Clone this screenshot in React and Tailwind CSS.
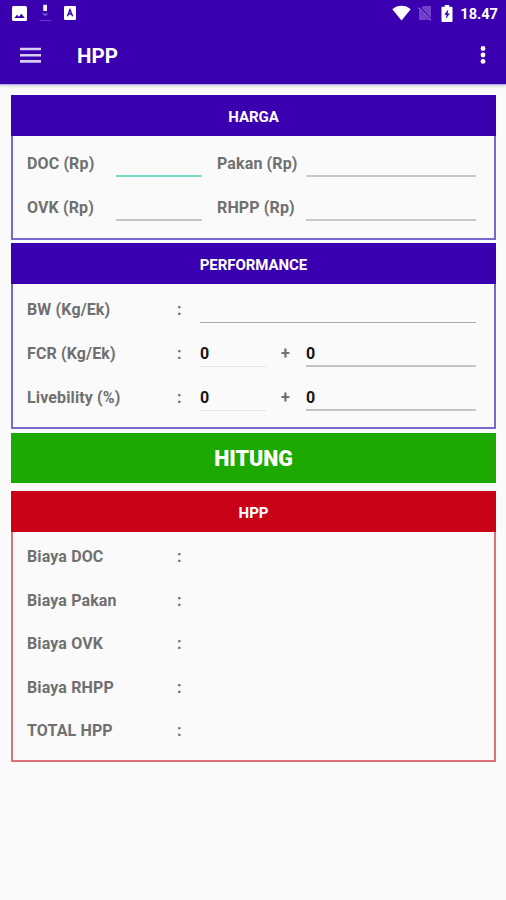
import React from "react";

function Label({ children, className = "" }) {
  return (
    <span className={`shrink-0 whitespace-nowrap pt-[1px] text-[16px] leading-[20px] font-bold tracking-[0.13px] text-[#707070] ${className}`}>
      {children}
    </span>
  );
}

function Field({ className = "", value = "" }) {
  return (
    <div className={`h-[24px] shrink-0 text-[16px] leading-[21px] font-bold text-[#151515] ${className}`}>
      {value}
    </div>
  );
}

function Card({ title, border, header, className = "", children }) {
  return (
    <section className={`flex flex-col ${className}`}>
      <h2 className={`flex h-[41px] shrink-0 items-center justify-center pt-[2px] text-[15px] leading-[20px] font-bold tracking-[-0.05px] text-white ${header}`}>
        {title}
      </h2>
      <div className={`min-h-0 flex-1 border-x-2 border-b-2 pl-[14px] ${border}`}>{children}</div>
    </section>
  );
}

function PriceRow({ left, right, active, className }) {
  return (
    <div className={`flex items-start ${className}`}>
      <Label className="w-[89px]">{left}</Label>
      <Field className={`w-[86px] border-b-2 ${active ? "border-[#75dcc9]" : "border-[#c4c4c4]"}`} />
      <Label className="ml-[15px] w-[89px]">{right}</Label>
      <Field className="w-[170px] border-b-2 border-[#c8c8c8]" />
    </div>
  );
}

function SumRow({ label, className }) {
  return (
    <div className={`flex items-start ${className}`}>
      <Label className="w-[150px]">{label}</Label>
      <Label className="w-[23px]">:</Label>
      <Field className="w-[66px] border-b border-[#e4e4e4]" value="0" />
      <Label className="w-[40px] pr-[1px] text-center">+</Label>
      <Field className="w-[170px] border-b-2 border-[#c4c4c4]" value="0" />
    </div>
  );
}

function StatusBar() {
  return (
    <div className="flex h-[26px] items-center">
      <svg className="ml-[12px]" width="15" height="15" viewBox="0 0 15 15">
        <rect width="15" height="15" rx="1.5" fill="#fff" />
        <path d="M2.3 12 5 8.7l1.8 2L9.4 7.7 12.8 12Z" fill="#3a00b0" />
      </svg>
      <svg className="ml-[12px]" width="13" height="18" viewBox="0 0 13 18">
        <rect x="4.2" y="0.8" width="3.8" height="6.2" fill="#f4eefc" />
        <path d="M2.5 9.2h7.5l-3.7 3.3Z" fill="#7646cc" />
        <path d="M0.5 16.5h12" stroke="#6632c3" strokeWidth="1.2" />
      </svg>
      <svg className="ml-[12px]" width="12" height="14" viewBox="0 0 12 14">
        <rect width="12" height="14" rx="1.2" fill="#fff" />
        <path d="m3.4 10.2 2.6-6.5 2.6 6.5M4.3 8h3.4" fill="none" stroke="#3a00b0" strokeWidth="1.4" />
      </svg>
      <svg className="ml-auto" width="19" height="16" viewBox="0 0 19 16">
        <path d="M0.3 4.2C5.8-.3 13.2-.3 18.7 4.2L9.5 15.5Z" fill="#fff" />
      </svg>
      <svg className="ml-[7px]" width="14" height="16" viewBox="0 0 14 16">
        <path d="M5.2 1H13v14H1V5.2Z" fill="#703fcc" />
        <path d="m0 1.2 13.5 14.5" stroke="#3a00b0" strokeWidth="2.5" />
        <path d="m0.5 2.6 12.5 12.8" stroke="#9168dc" strokeWidth="1.3" />
      </svg>
      <svg className="ml-[9px]" width="12" height="17" viewBox="0 0 12 17">
        <path d="M3.8 0h4.4v1.7H10.6Q11.5 1.7 11.5 2.6V16Q11.5 17 10.5 17h-9Q.5 17 .5 16V2.6Q.5 1.7 1.4 1.7H3.8Z" fill="#fff" />
        <path d="M7.3 4.2 3.3 9.8h2.2L4.8 14 8.8 8.5H6.6Z" fill="#3a00b0" />
      </svg>
      <span className="mr-[8px] ml-[7px] pt-[2px] text-[14.6px] leading-[18px] font-bold text-white">
        18.47
      </span>
    </div>
  );
}

const costs = ["Biaya DOC", "Biaya Pakan", "Biaya OVK", "Biaya RHPP", "TOTAL HPP"];

export default function App() {
  return (
    <div className="h-[900px] w-[506px] overflow-hidden bg-[#fafafa] font-['Roboto',sans-serif]">
      <header className="h-[85px] border-b border-[#b3aaf0] bg-[#3a00b0] shadow-[0_1px_3px_rgba(0,0,0,0.18)]">
        <StatusBar />
        <div className="flex h-[58px] items-center">
          <svg className="ml-[20px]" width="21" height="16" viewBox="0 0 21 16">
            <path d="M0 2h21M0 8.2h21M0 14.4h21" stroke="#dacdf3" strokeWidth="2.6" />
          </svg>
          <h1 className="ml-[36px] pt-[2px] text-[20.5px] leading-[28px] font-bold text-white">HPP</h1>
          <svg className="mr-[20px] ml-auto" width="6" height="18" viewBox="0 0 6 18">
            <circle cx="3" cy="2.5" r="2.4" fill="#fff" />
            <circle cx="3" cy="9" r="2.4" fill="#fff" />
            <circle cx="3" cy="15.4" r="2.4" fill="#fff" />
          </svg>
        </div>
      </header>

      <main className="flex flex-col pt-[10px] pr-[10px] pl-[11px]">
        <Card title="HARGA" border="border-[#7a66cc]" header="bg-[#3a00b0]" className="h-[145px]">
          <PriceRow left="DOC (Rp)" right="Pakan (Rp)" active className="mt-[17px] h-[44px]" />
          <PriceRow left="OVK (Rp)" right="RHPP (Rp)" className="h-[30px]" />
        </Card>

        <Card title="PERFORMANCE" border="border-[#7a66cc]" header="bg-[#3a00b0]" className="mt-[3px] h-[186px]">
          <div className="mt-[15px] flex h-[44px] items-start">
            <Label className="w-[150px]">BW (Kg/Ek)</Label>
            <Label className="w-[23px]">:</Label>
            <Field className="w-[276px] border-b border-[#a9a9a9]" />
          </div>
          <SumRow label="FCR (Kg/Ek)" className="h-[44px]" />
          <SumRow label="Livebility (%)" className="h-[30px]" />
        </Card>

        <button className="mt-[4px] h-[50px] bg-[#1caa02] pt-[2px] text-[21.4px] leading-[28px] font-black text-white">
          HITUNG
        </button>

        <Card title="HPP" border="border-[#de7075]" header="bg-[#ca0218]" className="mt-[8px] h-[271px]">
          <div className="pt-[14px]">
            {costs.map((c) => (
              <div key={c} className="flex h-[43.6px] items-start">
                <Label className="w-[150px]">{c}</Label>
                <Label>:</Label>
              </div>
            ))}
          </div>
        </Card>
      </main>
    </div>
  );
}
